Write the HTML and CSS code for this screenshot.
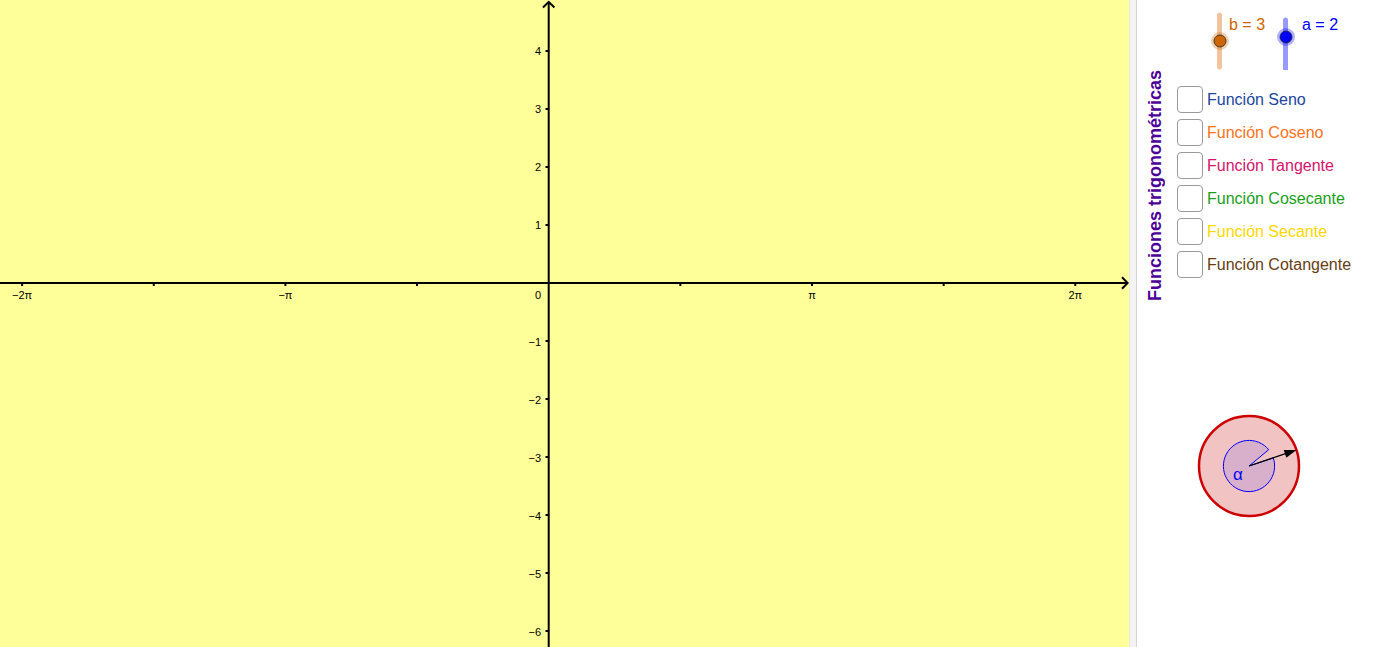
FILE: index.html
```html
<!DOCTYPE html>
<html lang="es">
<head>
<meta charset="utf-8">
<title>Funciones trigonométricas</title>
<link rel="stylesheet" href="styles.css">
</head>
<body>
<div class="app">
  <div class="graphics">
    <svg class="plot" width="1129" height="647" viewBox="0 0 1129 647" xmlns="http://www.w3.org/2000/svg">
      <g class="ticks" stroke="#000" stroke-width="2">
        <line x1="22.1" y1="283" x2="22.1" y2="286"/>
        <line x1="153.75" y1="283" x2="153.75" y2="286"/>
        <line x1="285.4" y1="283" x2="285.4" y2="286"/>
        <line x1="417.05" y1="283" x2="417.05" y2="286"/>
        <line x1="680.35" y1="283" x2="680.35" y2="286"/>
        <line x1="812" y1="283" x2="812" y2="286"/>
        <line x1="943.65" y1="283" x2="943.65" y2="286"/>
        <line x1="1075.3" y1="283" x2="1075.3" y2="286"/>
        <line x1="545.5" y1="51" x2="548.7" y2="51"/>
        <line x1="545.5" y1="109" x2="548.7" y2="109"/>
        <line x1="545.5" y1="167" x2="548.7" y2="167"/>
        <line x1="545.5" y1="225" x2="548.7" y2="225"/>
        <line x1="545.5" y1="341" x2="548.7" y2="341"/>
        <line x1="545.5" y1="399" x2="548.7" y2="399"/>
        <line x1="545.5" y1="457" x2="548.7" y2="457"/>
        <line x1="545.5" y1="515" x2="548.7" y2="515"/>
        <line x1="545.5" y1="573" x2="548.7" y2="573"/>
        <line x1="545.5" y1="631" x2="548.7" y2="631"/>
      </g>
      <g class="axes" stroke="#000" stroke-width="2" fill="none">
        <line x1="0" y1="283" x2="1127.5" y2="283"/>
        <line x1="548.7" y1="2" x2="548.7" y2="647"/>
        <polyline points="1122,277.3 1127.7,283 1122,288.7"/>
        <polyline points="543,7.5 548.7,1.8 554.4,7.5"/>
      </g>
      <g class="xlabels" text-anchor="middle">
        <text x="22.1" y="299">−2π</text>
        <text x="285.4" y="299">−π</text>
        <text x="812" y="299">π</text>
        <text x="1075.3" y="299">2π</text>
      </g>
      <g class="ylabels" text-anchor="end">
        <text x="541" y="299">0</text>
        <text x="541" y="55">4</text>
        <text x="541" y="113">3</text>
        <text x="541" y="171">2</text>
        <text x="541" y="229">1</text>
        <text x="541" y="345.5">−1</text>
        <text x="541" y="403.5">−2</text>
        <text x="541" y="461.5">−3</text>
        <text x="541" y="519.5">−4</text>
        <text x="541" y="577.5">−5</text>
        <text x="541" y="635.5">−6</text>
      </g>
    </svg>
  </div>
  <div class="divider"></div>
  <div class="panel">
    <svg class="sliders" width="245" height="70" viewBox="0 0 245 70" xmlns="http://www.w3.org/2000/svg">
      <line x1="82.5" y1="15" x2="82.5" y2="67" stroke="#f2c49e" stroke-width="5" stroke-linecap="round"/>
      <circle cx="83" cy="41" r="9" fill="#cc6600" fill-opacity="0.3"/>
      <circle cx="83" cy="41" r="6" fill="#cc6600" stroke="#222" stroke-width="0.8"/>
      <text class="slider-label b" x="92" y="30">b = 3</text>
      <line x1="148.5" y1="20" x2="148.5" y2="72" stroke="#9999ff" stroke-width="5" stroke-linecap="round"/>
      <circle cx="149" cy="37" r="9" fill="#0000ff" fill-opacity="0.3"/>
      <circle cx="149" cy="37" r="6" fill="#0000ff" stroke="#222" stroke-width="0.8"/>
      <text class="slider-label a" x="165" y="30">a = 2</text>
    </svg>
    <div class="menu">
      <div class="title">Funciones trigonométricas</div>
      <ul class="list">
        <li class="item"><span class="box"></span><span class="label seno">Función Seno</span></li>
        <li class="item"><span class="box"></span><span class="label coseno">Función Coseno</span></li>
        <li class="item"><span class="box"></span><span class="label tangente">Función Tangente</span></li>
        <li class="item"><span class="box"></span><span class="label cosecante">Función Cosecante</span></li>
        <li class="item"><span class="box"></span><span class="label secante">Función Secante</span></li>
        <li class="item"><span class="box"></span><span class="label cotangente">Función Cotangente</span></li>
      </ul>
    </div>
    <svg class="dial" width="110" height="110" viewBox="0 0 110 110" xmlns="http://www.w3.org/2000/svg">
      <circle cx="55" cy="55" r="50" fill="#f2c3c3" stroke="#cc0000" stroke-width="2.5"/>
      <path d="M55 55 L74.72 38.68 A25.6 25.6 0 1 0 79.26 46.83 Z" fill="#d9b0cb" stroke="#0000ff" stroke-width="1"/>
      <line x1="55" y1="55" x2="91.5" y2="42.7" stroke="#000" stroke-width="1.3"/>
      <polygon points="102.4,39.05 92.31,46.67 89.75,39.09" fill="#000"/>
      <text class="alpha" x="39" y="69">α</text>
    </svg>
  </div>
</div>
</body>
</html>
```

FILE: styles.css
```css
html, body {
  margin: 0;
  padding: 0;
  background: #ffffff;
  overflow: hidden;
}

body {
  font-family: "Liberation Sans", Arial, sans-serif;
}

.app {
  display: flex;
  width: 1382px;
  height: 647px;
}

.graphics {
  width: 1129px;
  height: 647px;
  background: #ffff99;
  flex: none;
}

.plot {
  display: block;
}

.plot text {
  font-family: "Liberation Sans", Arial, sans-serif;
  font-size: 11px;
  fill: #000;
}

.divider {
  width: 6px;
  flex: none;
  background: #f3f3f3;
  border-left: 1px solid #e8e8e8;
  border-right: 1px solid #d6d6d6;
}

.panel {
  flex: 1;
  display: flex;
  flex-direction: column;
  background: #ffffff;
}

.sliders {
  display: block;
  flex: none;
}

.slider-label {
  font-family: "Liberation Sans", Arial, sans-serif;
  font-size: 16px;
}

.slider-label.b {
  fill: #cc6600;
}

.slider-label.a {
  fill: #0000ff;
}

.menu {
  display: flex;
  align-items: flex-start;
  height: 232px;
  padding-left: 8px;
  flex: none;
}

.title {
  writing-mode: vertical-rl;
  transform: rotate(180deg);
  font-weight: bold;
  font-size: 18px;
  line-height: 20px;
  color: #4c0099;
  white-space: nowrap;
}

.list {
  list-style: none;
  margin: 0 0 0 12px;
  padding: 16px 0 0 0;
  display: flex;
  flex-direction: column;
  gap: 6px;
}

.item {
  display: flex;
  align-items: center;
  height: 27px;
}

.box {
  width: 26px;
  height: 27px;
  box-sizing: border-box;
  border: 1.5px solid #9a9a9a;
  border-radius: 4px;
  background: #ffffff;
  flex: none;
}

.label {
  margin-left: 4px;
  font-size: 16px;
  white-space: nowrap;
}

.seno { color: #1a46a0; }
.coseno { color: #ff7219; }
.tangente { color: #d4156d; }
.cosecante { color: #1aa01a; }
.secante { color: #ffd800; }
.cotangente { color: #663e12; }

.dial {
  display: block;
  flex: none;
  margin-top: 109px;
  margin-left: 57px;
}

.alpha {
  font-family: "Liberation Sans", Arial, sans-serif;
  font-size: 17px;
  fill: #0000ff;
}
```
